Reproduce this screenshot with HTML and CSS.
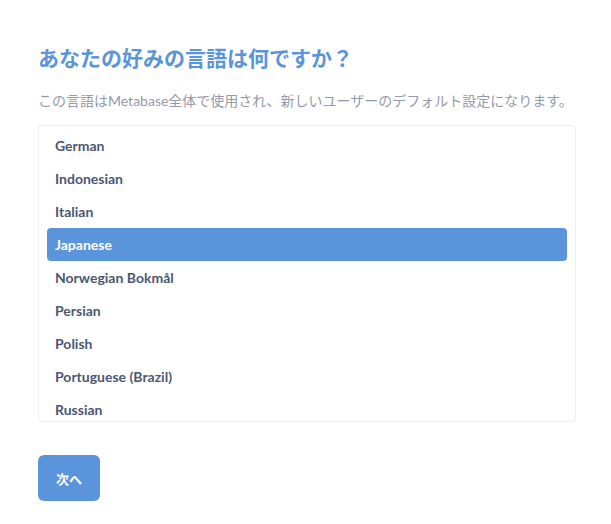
FILE: index.html
```html
<!DOCTYPE html>
<html lang="ja">
<head>
<meta charset="utf-8">
<link rel="stylesheet" href="styles.css">
</head>
<body>
<main class="page">
  <h1 class="title">あなたの好みの言語は何ですか？</h1>
  <p class="subtitle">この言語はMetabase全体で使用され、新しいユーザーのデフォルト設定になります。</p>
  <div class="list">
    <div class="item">German</div>
    <div class="item">Indonesian</div>
    <div class="item">Italian</div>
    <div class="item selected">Japanese</div>
    <div class="item">Norwegian Bokmål</div>
    <div class="item">Persian</div>
    <div class="item">Polish</div>
    <div class="item">Portuguese (Brazil)</div>
    <div class="item">Russian</div>
  </div>
  <button class="next">次へ</button>
</main>
</body>
</html>
```

FILE: styles.css
```css
html, body {
  margin: 0;
  padding: 0;
  background: #ffffff;
}
body {
  font-family: Lato, "Noto Sans CJK JP", sans-serif;
}
.page {
  padding: 44px 35px 0 38px;
  display: flex;
  flex-direction: column;
  align-items: flex-start;
}
.title {
  margin: 0;
  font-size: 21px;
  line-height: 28px;
  font-weight: 700;
  color: #5a94da;
}
.subtitle {
  margin: 19px 0 0 0;
  font-size: 14px;
  line-height: 20px;
  color: #949aab;
}
.list {
  margin-top: 14px;
  align-self: stretch;
  box-sizing: border-box;
  height: 297px;
  border: 1px solid #eeeeee;
  border-radius: 4px;
  padding: 3px 8px 0 8px;
  overflow: hidden;
}
.item {
  height: 33px;
  line-height: 33px;
  padding-left: 8px;
  border-radius: 4px;
  font-size: 14px;
  font-weight: 700;
  color: #4c5773;
}
.item.selected {
  background: #5a94da;
  color: #ffffff;
}
.next {
  margin-top: 33px;
  width: 62px;
  height: 46px;
  border: none;
  border-radius: 6px;
  background: #5a94da;
  color: #ffffff;
  font-family: Lato, "Noto Sans CJK JP", sans-serif;
  font-size: 13px;
  font-weight: 700;
  padding: 0;
}
```
